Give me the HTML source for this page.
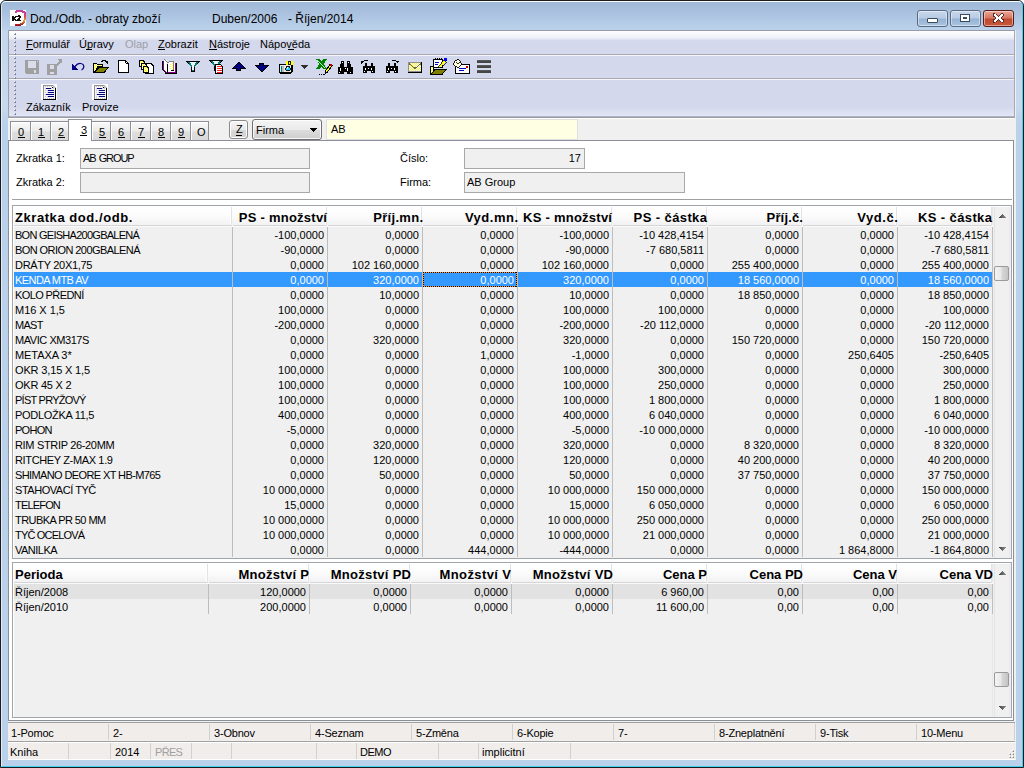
<!DOCTYPE html>
<html><head><meta charset="utf-8"><style>
html,body{margin:0;padding:0;width:1024px;height:768px;overflow:hidden;background:#ffffff;}
body{position:relative;font-family:"Liberation Sans",sans-serif;font-size:11px;}
body>div{position:absolute;white-space:nowrap;box-sizing:content-box;}
svg{shape-rendering:crispEdges;}
</style></head><body>
<div style="left:0;top:0;width:1024px;height:768px;background:linear-gradient(#c2d6ee,#c6d9ef 14%,#b9d1ea 16%,#b9d1ea);border-radius:6px 6px 0 0;"></div>
<div style="left:0;top:0;width:1024px;height:30px;background:linear-gradient(#9db7d7,#a9c1de 40%,#b6cde8 80%,#bbd2ec);border-radius:6px 6px 0 0;"></div>
<div style="left:0;top:0;width:1022px;height:766px;border:1px solid #1a1c20;border-radius:6px 6px 0 0;"></div>
<div style="left:1px;top:1px;width:1020px;height:764px;border:1px solid rgba(255,255,255,0.6);border-top-color:rgba(255,255,255,0.95);border-radius:5px 5px 0 0;border-bottom:1px solid #40d0f0;border-right:1px solid #40d0f0;"></div>
<svg style="position:absolute;left:10px;top:10px" width="16" height="16" viewBox="0 0 16 16"><defs><linearGradient id="k2g" x1="0" y1="0" x2="0" y2="1"><stop offset="0" stop-color="#c040a0"/><stop offset="0.35" stop-color="#e04060"/><stop offset="0.7" stop-color="#f0a030"/><stop offset="1" stop-color="#a01020"/></linearGradient></defs><rect x="0" y="0" width="16" height="16" fill="#fff"/><path d="M5 2.2 Q11 -0.5 14.5 2.5 Q16.5 8 13 13 Q10 15.5 5 15" stroke="url(#k2g)" stroke-width="2.2" fill="none"/><rect x="2" y="6" width="2" height="5" fill="#111"/><path d="M4 8.5 L6.5 6 M4 8.5 L6.5 11" stroke="#111" stroke-width="1.8"/><path d="M7 6.8 Q8.5 5.6 10 6.4 Q10.8 7.6 9 9 L7 10.6 L10.6 10.6" stroke="#111" stroke-width="1.6" fill="none"/></svg>
<div style="left:30px;top:9px;font-size:12px;line-height:20px;color:#000;">Dod./Odb. - obraty zboží</div>
<div style="left:212px;top:9px;font-size:12px;line-height:20px;color:#000;">Duben/2006</div>
<div style="left:288px;top:9px;font-size:12px;line-height:20px;color:#000;">- Říjen/2014</div>
<div style="left:917px;top:10px;width:29px;height:15px;border:1px solid #5a6a80;border-radius:3px;background:linear-gradient(#c8d8ec,#b8cce4 45%,#98b4d4 55%,#a8c4e0);box-shadow:inset 0 0 0 1px rgba(255,255,255,0.45);"></div>
<div style="left:950px;top:10px;width:29px;height:15px;border:1px solid #5a6a80;border-radius:3px;background:linear-gradient(#c8d8ec,#b8cce4 45%,#98b4d4 55%,#a8c4e0);box-shadow:inset 0 0 0 1px rgba(255,255,255,0.45);"></div>
<div style="left:983px;top:10px;width:29px;height:15px;border:1px solid #5a1a1a;border-radius:3px;background:linear-gradient(#e8a898,#d87860 45%,#c04a30 55%,#c85838);box-shadow:inset 0 0 0 1px rgba(255,255,255,0.45);"></div>
<div style="left:927px;top:18px;width:9px;height:3px;background:#fff;border:1px solid #3a4a5a;border-radius:1px;"></div>
<div style="left:961px;top:15px;width:4px;height:2px;border:2px solid #fff;outline:1px solid #3a4a5a;background:#6a7a90;box-shadow:inset 0 0 0 1px #3a4a5a;"></div>
<svg style="position:absolute;left:992px;top:13px" width="13" height="10" viewBox="0 0 13 10"><path d="M2.5 2 L10.5 8 M10.5 2 L2.5 8" stroke="#503030" stroke-width="3.6" stroke-linecap="round"/><path d="M2.5 2 L10.5 8 M10.5 2 L2.5 8" stroke="#fff" stroke-width="2.2" stroke-linecap="round"/></svg>
<div style="left:8px;top:30px;width:1008px;height:730px;background:#f0f0f0;"></div>
<div style="left:8px;top:30px;width:1007px;height:1px;background:#9a9aa4;"></div>
<div style="left:8px;top:30px;width:1px;height:88px;background:#a0a0a4;"></div>
<div style="left:9px;top:31px;width:1005px;height:23px;background:linear-gradient(#ffffff,#eef0f8 30%,#d4d8ec 42%,#d4d8ec);"></div>
<div style="left:9px;top:54px;width:1005px;height:1px;background:#a8a8b0;"></div>
<div style="left:9px;top:55px;width:1005px;height:1px;background:#f4f6fc;"></div>
<div style="left:9px;top:56px;width:1005px;height:22px;background:#d4d8ec;"></div>
<div style="left:9px;top:78px;width:1005px;height:1px;background:#a8a8b0;"></div>
<div style="left:9px;top:79px;width:1005px;height:1px;background:#f4f6fc;"></div>
<div style="left:9px;top:80px;width:1005px;height:36px;background:linear-gradient(#d4d8ec 75%,#e2e6f6);"></div>
<div style="left:9px;top:116px;width:1005px;height:1px;background:#b0b4c8;"></div>
<div style="left:9px;top:117px;width:1006px;height:1px;background:#9c9c9c;"></div>
<div style="left:1014px;top:31px;width:1px;height:87px;background:#a8a8b0;"></div>
<div style="left:14px;top:33px;width:2px;height:2px;background:linear-gradient(135deg,#ffffff 0 35%,#707890 55%);"></div>
<div style="left:14px;top:37px;width:2px;height:2px;background:linear-gradient(135deg,#ffffff 0 35%,#707890 55%);"></div>
<div style="left:14px;top:41px;width:2px;height:2px;background:linear-gradient(135deg,#ffffff 0 35%,#707890 55%);"></div>
<div style="left:14px;top:45px;width:2px;height:2px;background:linear-gradient(135deg,#ffffff 0 35%,#707890 55%);"></div>
<div style="left:14px;top:49px;width:2px;height:2px;background:linear-gradient(135deg,#ffffff 0 35%,#707890 55%);"></div>
<div style="left:14px;top:53px;width:2px;height:2px;background:linear-gradient(135deg,#ffffff 0 35%,#707890 55%);"></div>
<div style="left:14px;top:57px;width:2px;height:2px;background:linear-gradient(135deg,#ffffff 0 35%,#707890 55%);"></div>
<div style="left:14px;top:61px;width:2px;height:2px;background:linear-gradient(135deg,#ffffff 0 35%,#707890 55%);"></div>
<div style="left:14px;top:65px;width:2px;height:2px;background:linear-gradient(135deg,#ffffff 0 35%,#707890 55%);"></div>
<div style="left:14px;top:69px;width:2px;height:2px;background:linear-gradient(135deg,#ffffff 0 35%,#707890 55%);"></div>
<div style="left:14px;top:73px;width:2px;height:2px;background:linear-gradient(135deg,#ffffff 0 35%,#707890 55%);"></div>
<div style="left:14px;top:77px;width:2px;height:2px;background:linear-gradient(135deg,#ffffff 0 35%,#707890 55%);"></div>
<div style="left:14px;top:81px;width:2px;height:2px;background:linear-gradient(135deg,#ffffff 0 35%,#707890 55%);"></div>
<div style="left:14px;top:85px;width:2px;height:2px;background:linear-gradient(135deg,#ffffff 0 35%,#707890 55%);"></div>
<div style="left:14px;top:89px;width:2px;height:2px;background:linear-gradient(135deg,#ffffff 0 35%,#707890 55%);"></div>
<div style="left:14px;top:93px;width:2px;height:2px;background:linear-gradient(135deg,#ffffff 0 35%,#707890 55%);"></div>
<div style="left:14px;top:97px;width:2px;height:2px;background:linear-gradient(135deg,#ffffff 0 35%,#707890 55%);"></div>
<div style="left:14px;top:101px;width:2px;height:2px;background:linear-gradient(135deg,#ffffff 0 35%,#707890 55%);"></div>
<div style="left:14px;top:105px;width:2px;height:2px;background:linear-gradient(135deg,#ffffff 0 35%,#707890 55%);"></div>
<div style="left:14px;top:109px;width:2px;height:2px;background:linear-gradient(135deg,#ffffff 0 35%,#707890 55%);"></div>
<div style="left:14px;top:113px;width:2px;height:2px;background:linear-gradient(135deg,#ffffff 0 35%,#707890 55%);"></div>
<div style="left:26px;top:34px;font-size:11px;line-height:20px;color:#000;">Formulář</div>
<div style="left:79px;top:34px;font-size:11px;line-height:20px;color:#000;">Úpravy</div>
<div style="left:125px;top:34px;font-size:11px;line-height:20px;color:#a0a0a8;">Olap</div>
<div style="left:158px;top:34px;font-size:11px;line-height:20px;color:#000;">Zobrazit</div>
<div style="left:209px;top:34px;font-size:11px;line-height:20px;color:#000;">Nástroje</div>
<div style="left:260px;top:34px;font-size:11px;line-height:20px;color:#000;">Nápověda</div>
<div style="left:26px;top:49px;width:7px;height:1px;background:#000;"></div>
<div style="left:86px;top:49px;width:6px;height:1px;background:#000;"></div>
<div style="left:158px;top:49px;width:7px;height:1px;background:#000;"></div>
<div style="left:209px;top:49px;width:8px;height:1px;background:#000;"></div>
<div style="left:288px;top:49px;width:6px;height:1px;background:#000;"></div>
<svg style="position:absolute;left:0;top:54px" width="520" height="26" viewBox="0 0 520 26"><rect x="25" y="6" width="14" height="14" fill="#a0a0a0"/><rect x="28" y="7" width="8" height="7" fill="#d8dcec"/><rect x="37" y="7" width="1" height="1" fill="#d8dcec"/><rect x="34" y="16" width="2" height="3" fill="#d8dcec"/><rect x="25" y="19" width="1" height="1" fill="#d4d8ec"/><rect x="47" y="10" width="10" height="11" fill="#a0a0a0"/><rect x="50" y="11" width="4" height="4" fill="#d8dcec"/><rect x="50" y="18" width="4" height="2" fill="#d8dcec"/><path d="M55.5 12.5 L60 8" stroke="#a0a0a0" stroke-width="2.2" fill="none" /><polygon points="57,5 62,5 62,10" fill="#a0a0a0" stroke="none" stroke-width="1" /><polygon points="72,10 72,15.5 77.5,15.5" fill="#000080" stroke="none" stroke-width="1" /><path d="M75 12.5 Q77.5 9.200000000000003 80.5 9.5 Q84 10 83.8 12.799999999999997 Q83.4 15.299999999999997 81.5 16" stroke="#000080" stroke-width="1.25" fill="none" shape-rendering="geometricPrecision"/><defs><pattern id="dy" width="2" height="2" patternUnits="userSpaceOnUse"><rect width="2" height="2" fill="#ffff00"/><rect width="1" height="1" fill="#ffffff"/><rect x="1" y="1" width="1" height="1" fill="#ffffff"/></pattern></defs><polygon points="93.5,9.5 96.5,9.5 97.5,10.5 102.5,10.5 102.5,12.5 98,12.5 94.5,18.5 93.5,18.5" fill="url(#dy)" stroke="#000" stroke-width="1" /><polygon points="94.5,18.5 99,13.5 108.5,13.5 104,18.5" fill="#808000" stroke="#000" stroke-width="1" /><path d="M101 8 Q104 5.5 107 8" stroke="#000" stroke-width="1.2" fill="none" /><polygon points="105,8 108.5,7 108,10.5" fill="#000" stroke="none" stroke-width="1" /><polygon points="118.5,6.5 125.5,6.5 128.5,9.5 128.5,18.5 118.5,18.5" fill="#fff" stroke="#000" stroke-width="1" /><rect x="125" y="7" width="1" height="2" fill="#000"/><rect x="126" y="9" width="2" height="1" fill="#000"/><polygon points="145.5,9.5 151,9.5 153.5,12 153.5,19.5 145.5,19.5" fill="#fff" stroke="#000" stroke-width="1" /><polygon points="139.5,6.5 143,6.5 144.5,8 144.5,12.5 139.5,12.5" fill="url(#dy)" stroke="#000" stroke-width="1" /><polygon points="141.5,9.5 145,9.5 146.5,11 146.5,15.5 141.5,15.5" fill="url(#dy)" stroke="#000" stroke-width="1" /><polygon points="143.5,12.5 147,12.5 148.5,14 148.5,18.5 143.5,18.5" fill="url(#dy)" stroke="#000" stroke-width="1" /><rect x="164" y="6" width="3" height="11" fill="#fff"/><rect x="168" y="8" width="6" height="9" fill="#fff"/><rect x="174" y="9" width="1" height="9" fill="#fff"/><rect x="166" y="17" width="9" height="1" fill="#fff"/><rect x="162" y="7" width="1" height="9" fill="#000"/><rect x="163" y="16" width="1" height="1" fill="#000"/><rect x="164" y="17" width="1" height="1" fill="#000"/><rect x="165" y="18" width="1" height="2" fill="#000"/><rect x="166" y="19" width="11" height="1" fill="#000"/><rect x="176" y="9" width="1" height="10" fill="#000"/><rect x="163" y="7" width="1" height="9" fill="#800080"/><rect x="164" y="16" width="1" height="1" fill="#800080"/><rect x="165" y="17" width="1" height="1" fill="#800080"/><rect x="166" y="18" width="10" height="1" fill="#800080"/><rect x="175" y="9" width="1" height="9" fill="#800080"/><rect x="164" y="5" width="1" height="1" fill="#808080"/><rect x="165" y="6" width="1" height="1" fill="#808080"/><rect x="166" y="7" width="1" height="1" fill="#808080"/><rect x="167" y="8" width="1" height="1" fill="#808080"/><rect x="167" y="10" width="1" height="9" fill="#000"/><rect x="168" y="8" width="1" height="1" fill="#808080"/><rect x="169" y="7" width="5" height="1" fill="#808080"/><rect x="173" y="7" width="1" height="9" fill="#808080"/><rect x="170" y="10" width="1" height="1" fill="#ffff00"/><rect x="170" y="12" width="1" height="1" fill="#ffff00"/><rect x="170" y="14" width="1" height="1" fill="#ffff00"/><rect x="172" y="9" width="1" height="1" fill="#ffff00"/><rect x="172" y="11" width="1" height="1" fill="#ffff00"/><rect x="172" y="13" width="1" height="1" fill="#ffff00"/><rect x="172" y="15" width="1" height="1" fill="#ffff00"/><rect x="171" y="16" width="3" height="1" fill="#000"/><polygon points="186,7 200,7 195,13 195,18 191,18 191,13" fill="#000" stroke="none" stroke-width="1" /><polygon points="187.3,8 198.7,8 194,13.400000000000006 194,17 192,17 192,13.400000000000006" fill="#008080" stroke="none" stroke-width="1" /><polygon points="189.5,8 196.5,8 193.6,12 193.6,16 192.4,16 192.4,12" fill="#f0f4f4" stroke="none" stroke-width="1" /><polygon points="209,6 223,6 218,12 218,17 214,17 214,12" fill="#000" stroke="none" stroke-width="1" /><polygon points="210.3,7 221.7,7 217,12.400000000000006 217,16 215,16 215,12.400000000000006" fill="#008080" stroke="none" stroke-width="1" /><polygon points="212.5,7 219.5,7 216.6,11 216.6,15 215.4,15 215.4,11" fill="#f0f4f4" stroke="none" stroke-width="1" /><polygon points="215.5,10.5 220.5,10.5 222.5,12.5 222.5,19.5 215.5,19.5" fill="#fff" stroke="#000" stroke-width="1" /><rect x="221" y="11" width="1" height="1" fill="#000"/><rect x="217" y="12" width="5" height="1" fill="#ff2020"/><rect x="217" y="14" width="5" height="1" fill="#ff2020"/><rect x="217" y="16" width="5" height="1" fill="#ff2020"/><rect x="217" y="18" width="5" height="1" fill="#ff2020"/><rect x="238" y="8" width="2" height="1" fill="#000"/><rect x="237" y="9" width="4" height="1" fill="#000"/><rect x="238" y="9" width="2" height="1" fill="#000080"/><rect x="236" y="10" width="6" height="1" fill="#000"/><rect x="237" y="10" width="4" height="1" fill="#000080"/><rect x="235" y="11" width="8" height="1" fill="#000"/><rect x="236" y="11" width="6" height="1" fill="#000080"/><rect x="234" y="12" width="10" height="1" fill="#000"/><rect x="235" y="12" width="8" height="1" fill="#000080"/><rect x="233" y="13" width="12" height="1" fill="#000"/><rect x="234" y="13" width="10" height="1" fill="#000080"/><rect x="232" y="14" width="14" height="1" fill="#000"/><rect x="233" y="14" width="12" height="1" fill="#000080"/><rect x="232" y="14" width="14" height="1" fill="#000"/><rect x="237" y="14" width="3" height="1" fill="#000080"/><rect x="236" y="15" width="5" height="2" fill="#000"/><rect x="237" y="15" width="3" height="1" fill="#000080"/><rect x="259" y="9" width="5" height="2" fill="#000"/><rect x="260" y="10" width="3" height="1" fill="#000080"/><rect x="255" y="11" width="14" height="1" fill="#000"/><rect x="260" y="11" width="3" height="1" fill="#000080"/><rect x="256" y="12" width="12" height="1" fill="#000"/><rect x="257" y="12" width="10" height="1" fill="#000080"/><rect x="257" y="13" width="10" height="1" fill="#000"/><rect x="258" y="13" width="8" height="1" fill="#000080"/><rect x="258" y="14" width="8" height="1" fill="#000"/><rect x="259" y="14" width="6" height="1" fill="#000080"/><rect x="259" y="15" width="6" height="1" fill="#000"/><rect x="260" y="15" width="4" height="1" fill="#000080"/><rect x="260" y="16" width="4" height="1" fill="#000"/><rect x="261" y="16" width="2" height="1" fill="#000080"/><rect x="261" y="17" width="2" height="1" fill="#000"/><rect x="279.5" y="10.5" width="12.5" height="8.5" rx="1.5" fill="#e8e8e8" stroke="#000" stroke-width="1.6"/><rect x="281" y="12" width="1" height="6" fill="#008080"/><rect x="282" y="12" width="2" height="6" fill="#b8c0c0"/><circle cx="288" cy="14.5" r="2.3" fill="#20d0ff" stroke="#000" stroke-width="0.9"/><circle cx="287.4" cy="13.900000000000006" r="0.9" fill="#ffffff"/><rect x="286" y="7" width="7" height="4" fill="#ffff00"/><circle cx="289.5" cy="9" r="1.5" fill="none" stroke="#000" stroke-width="0.9"/><polygon points="301,11 308.5,11 304.75,15" fill="#303030" stroke="none" stroke-width="1" /><polygon points="316,5 320,5 321.5,7.5 323,5 327,5 323.5,10 327,15 323,15 321.5,12.5 320,15 316,15 319.5,10" fill="#008000" stroke="none" stroke-width="1" /><path d="M317 6 L325 14" stroke="#d0ffd0" stroke-width="0.9" fill="none" /><polygon points="325,20 325.5,17 330,10.5 332,11.5 327.5,18" fill="#ffff00" stroke="#000" stroke-width="1" /><rect x="330" y="10" width="2" height="1.5" fill="#c00000"/><rect x="319" y="20" width="1" height="1" fill="#000"/><rect x="321" y="20" width="1" height="1" fill="#000"/><rect x="323" y="20" width="1" height="1" fill="#000"/><rect x="341" y="7" width="3" height="3" fill="#000"/><rect x="347" y="7" width="3" height="3" fill="#000"/><rect x="340" y="10" width="4" height="4" fill="#000"/><rect x="347" y="10" width="4" height="4" fill="#000"/><rect x="338" y="13" width="15" height="7" fill="#000"/><rect x="344" y="18" width="3" height="2" fill="#d4d8ec"/><rect x="340" y="14" width="1" height="3" fill="#fff"/><rect x="347" y="14" width="1" height="3" fill="#fff"/><rect x="345" y="14" width="1" height="1" fill="#fff"/><rect x="339" y="18" width="1" height="1" fill="#fff"/><rect x="350" y="18" width="1" height="1" fill="#fff"/><rect x="342" y="8" width="1" height="1" fill="#fff"/><rect x="348" y="8" width="1" height="1" fill="#fff"/><rect x="365" y="9" width="2" height="4" fill="#000"/><rect x="371" y="9" width="2" height="4" fill="#000"/><rect x="363" y="12" width="12" height="7" fill="#000"/><rect x="367" y="17" width="4" height="2" fill="#d4d8ec"/><rect x="365" y="14" width="1" height="2" fill="#fff"/><rect x="371" y="14" width="1" height="2" fill="#fff"/><rect x="368" y="14" width="1" height="1" fill="#fff"/><rect x="364" y="17" width="1" height="1" fill="#fff"/><rect x="372" y="17" width="1" height="1" fill="#fff"/><path d="M362.5 8 Q364.5 6 368.5 6.5" stroke="#000" stroke-width="1.1" fill="none" /><polygon points="360.5,7 364,7.5 361.5,10" fill="#000" stroke="none" stroke-width="1" /><rect x="388" y="9" width="2" height="4" fill="#000"/><rect x="394" y="9" width="2" height="4" fill="#000"/><rect x="386" y="12" width="12" height="7" fill="#000"/><rect x="390" y="17" width="4" height="2" fill="#d4d8ec"/><rect x="388" y="14" width="1" height="2" fill="#fff"/><rect x="394" y="14" width="1" height="2" fill="#fff"/><rect x="391" y="14" width="1" height="1" fill="#fff"/><rect x="387" y="17" width="1" height="1" fill="#fff"/><rect x="395" y="17" width="1" height="1" fill="#fff"/><path d="M392 6.5 Q396 6 397.5 8" stroke="#000" stroke-width="1.1" fill="none" /><polygon points="395.5,7.5 399,7 398,10" fill="#000" stroke="none" stroke-width="1" /><defs><pattern id="dl" width="2" height="2" patternUnits="userSpaceOnUse"><rect width="2" height="2" fill="#f0f060"/><rect width="1" height="1" fill="#ffffff"/><rect x="1" y="1" width="1" height="1" fill="#ffffe0"/></pattern></defs><rect x="408" y="8" width="14" height="11" fill="#000"/><rect x="408" y="8" width="13" height="10" fill="#909090"/><rect x="409" y="9" width="12" height="8" fill="url(#dl)"/><path d="M409 9.5 L415 14.5 L421 9.5" stroke="#707030" stroke-width="1" fill="none" /><polygon points="433.5,5.5 442,5.5 442,13 433.5,13" fill="#fff" stroke="#000" stroke-width="1" /><rect x="435" y="4" width="1" height="2" fill="#000"/><rect x="437" y="4" width="1" height="2" fill="#000"/><rect x="439" y="4" width="1" height="2" fill="#000"/><rect x="441" y="4" width="1" height="2" fill="#000"/><rect x="435" y="8" width="4" height="1" fill="#0000c0"/><rect x="435" y="10" width="3" height="1" fill="#0000c0"/><polygon points="430.5,12.5 433,12.5 433,18 430.5,20.5" fill="url(#dy)" stroke="#000" stroke-width="1" /><polygon points="431,20.5 435,15.5 446,15.5 442,20.5" fill="#808000" stroke="#000" stroke-width="1" /><polygon points="438,13 444,6 446,7.5 440,14" fill="#ffff00" stroke="#000" stroke-width="0.8" /><rect x="444" y="4" width="3" height="3" fill="#0000ff"/><polygon points="455.5,10.5 469.5,10.5 469.5,19.5 455.5,19.5" fill="#fff" stroke="#000" stroke-width="1" /><rect x="459" y="14" width="7" height="1" fill="#0000c0"/><rect x="459" y="16" width="5" height="1" fill="#0000c0"/><rect x="466" y="12" width="2" height="2" fill="#c00000"/><circle cx="457.5" cy="9.5" r="3.6" fill="#ffffe0" stroke="#000" stroke-width="0.9"/><path d="M456 8 L457.5 10 L459.5 8" stroke="#000" stroke-width="0.8" fill="none" /><rect x="477" y="6" width="14" height="3" fill="#454545"/><rect x="477" y="6" width="14" height="1" fill="#5a5a5a"/><rect x="477" y="11" width="14" height="3" fill="#454545"/><rect x="477" y="11" width="14" height="1" fill="#5a5a5a"/><rect x="477" y="16" width="14" height="3" fill="#454545"/><rect x="477" y="16" width="14" height="1" fill="#5a5a5a"/></svg>
<svg style="position:absolute;left:41px;top:84px" width="16" height="16" viewBox="0 0 16 16" shape-rendering="crispEdges"><defs><pattern id="dg" width="2" height="2" patternUnits="userSpaceOnUse"><rect width="2" height="2" fill="#f4f4f8"/><rect width="1" height="1" fill="#c8c8c8"/></pattern></defs><rect x="0" y="0" width="16" height="16" fill="#ffffff"/><rect x="2" y="1" width="12" height="14" fill="url(#dg)"/><rect x="2" y="1" width="10" height="1" fill="#909090"/><rect x="2" y="1" width="1" height="14" fill="#909090"/><rect x="14" y="4" width="1" height="12" fill="#000"/><rect x="2" y="15" width="13" height="1" fill="#000"/><rect x="11" y="3" width="4" height="1" fill="#000"/><polygon points="12,1 15,4 12,4" fill="#c0c0c0"/><rect x="5" y="4" width="5" height="1" fill="#000080"/><rect x="7" y="6" width="6" height="1" fill="#000080"/><rect x="7" y="8" width="6" height="1" fill="#000080"/><rect x="5" y="10" width="8" height="1" fill="#000080"/><rect x="7" y="12" width="6" height="1" fill="#000080"/></svg>
<svg style="position:absolute;left:92px;top:84px" width="16" height="16" viewBox="0 0 16 16" shape-rendering="crispEdges"><defs><pattern id="dg" width="2" height="2" patternUnits="userSpaceOnUse"><rect width="2" height="2" fill="#f4f4f8"/><rect width="1" height="1" fill="#c8c8c8"/></pattern></defs><rect x="0" y="0" width="16" height="16" fill="#ffffff"/><rect x="2" y="1" width="12" height="14" fill="url(#dg)"/><rect x="2" y="1" width="10" height="1" fill="#909090"/><rect x="2" y="1" width="1" height="14" fill="#909090"/><rect x="14" y="4" width="1" height="12" fill="#000"/><rect x="2" y="15" width="13" height="1" fill="#000"/><rect x="11" y="3" width="4" height="1" fill="#000"/><polygon points="12,1 15,4 12,4" fill="#c0c0c0"/><rect x="5" y="4" width="5" height="1" fill="#000080"/><rect x="7" y="6" width="6" height="1" fill="#000080"/><rect x="7" y="8" width="6" height="1" fill="#000080"/><rect x="5" y="10" width="8" height="1" fill="#000080"/><rect x="7" y="12" width="6" height="1" fill="#000080"/></svg>
<div style="left:26px;top:97px;font-size:11px;line-height:20px;color:#000;">Zákazník</div>
<div style="left:82px;top:97px;font-size:11px;line-height:20px;color:#000;">Provize</div>
<div style="left:9px;top:118px;width:1005px;height:1px;background:#ffffff;"></div>
<div style="left:10px;top:121px;width:19px;height:19px;border:1px solid #8c8f98;border-bottom:none;background:linear-gradient(#fafafa,#ececec 45%,#dedede 55%,#d8d8d8);box-shadow:inset 1px 1px 0 #fff;"></div>
<div style="left:18px;top:122px;font-size:11px;line-height:20px;color:#000;">0</div>
<div style="left:18px;top:137px;width:7px;height:1px;background:#000;"></div>
<div style="left:30px;top:121px;width:19px;height:19px;border:1px solid #8c8f98;border-bottom:none;background:linear-gradient(#fafafa,#ececec 45%,#dedede 55%,#d8d8d8);box-shadow:inset 1px 1px 0 #fff;"></div>
<div style="left:38px;top:122px;font-size:11px;line-height:20px;color:#000;">1</div>
<div style="left:38px;top:137px;width:7px;height:1px;background:#000;"></div>
<div style="left:50px;top:121px;width:18px;height:19px;border:1px solid #8c8f98;border-bottom:none;background:linear-gradient(#fafafa,#ececec 45%,#dedede 55%,#d8d8d8);box-shadow:inset 1px 1px 0 #fff;"></div>
<div style="left:58px;top:122px;font-size:11px;line-height:20px;color:#000;">2</div>
<div style="left:58px;top:137px;width:7px;height:1px;background:#000;"></div>
<div style="left:91px;top:121px;width:18px;height:19px;border:1px solid #8c8f98;border-bottom:none;background:linear-gradient(#fafafa,#ececec 45%,#dedede 55%,#d8d8d8);box-shadow:inset 1px 1px 0 #fff;"></div>
<div style="left:99px;top:122px;font-size:11px;line-height:20px;color:#000;">5</div>
<div style="left:99px;top:137px;width:7px;height:1px;background:#000;"></div>
<div style="left:110px;top:121px;width:19px;height:19px;border:1px solid #8c8f98;border-bottom:none;background:linear-gradient(#fafafa,#ececec 45%,#dedede 55%,#d8d8d8);box-shadow:inset 1px 1px 0 #fff;"></div>
<div style="left:118px;top:122px;font-size:11px;line-height:20px;color:#000;">6</div>
<div style="left:118px;top:137px;width:7px;height:1px;background:#000;"></div>
<div style="left:130px;top:121px;width:19px;height:19px;border:1px solid #8c8f98;border-bottom:none;background:linear-gradient(#fafafa,#ececec 45%,#dedede 55%,#d8d8d8);box-shadow:inset 1px 1px 0 #fff;"></div>
<div style="left:138px;top:122px;font-size:11px;line-height:20px;color:#000;">7</div>
<div style="left:138px;top:137px;width:7px;height:1px;background:#000;"></div>
<div style="left:150px;top:121px;width:19px;height:19px;border:1px solid #8c8f98;border-bottom:none;background:linear-gradient(#fafafa,#ececec 45%,#dedede 55%,#d8d8d8);box-shadow:inset 1px 1px 0 #fff;"></div>
<div style="left:158px;top:122px;font-size:11px;line-height:20px;color:#000;">8</div>
<div style="left:158px;top:137px;width:7px;height:1px;background:#000;"></div>
<div style="left:170px;top:121px;width:19px;height:19px;border:1px solid #8c8f98;border-bottom:none;background:linear-gradient(#fafafa,#ececec 45%,#dedede 55%,#d8d8d8);box-shadow:inset 1px 1px 0 #fff;"></div>
<div style="left:178px;top:122px;font-size:11px;line-height:20px;color:#000;">9</div>
<div style="left:178px;top:137px;width:7px;height:1px;background:#000;"></div>
<div style="left:190px;top:121px;width:17px;height:19px;border:1px solid #8c8f98;border-bottom:none;background:linear-gradient(#fafafa,#ececec 45%,#dedede 55%,#d8d8d8);box-shadow:inset 1px 1px 0 #fff;"></div>
<div style="left:197px;top:122px;font-size:11px;line-height:20px;color:#000;">O</div>
<div style="left:8px;top:140px;width:1004px;height:579px;border:1px solid #8c8f98;background:#fff;"></div>
<div style="left:68px;top:119px;width:22px;height:21px;border:1px solid #8c8f98;border-bottom:none;background:#fff;"></div>
<div style="left:69px;top:140px;width:22px;height:1px;background:#fff;"></div>
<div style="left:81px;top:120px;font-size:11px;line-height:20px;color:#000;">3</div>
<div style="left:80px;top:135px;width:7px;height:1px;background:#000;"></div>
<div style="left:229px;top:120px;width:17px;height:17px;border:1px solid #8a8a8a;border-radius:3px;background:linear-gradient(#f8f8f8,#e8e8e8 50%,#d8d8d8 51%,#d0d0d0);box-shadow:inset 0 0 0 1px #fff;"></div>
<div style="left:236px;top:119px;font-size:11px;line-height:20px;color:#000;">Z</div>
<div style="left:236px;top:135px;width:6px;height:1px;background:#000;"></div>
<div style="left:252px;top:119px;width:68px;height:19px;border:1px solid #707070;border-radius:3px;background:linear-gradient(#f4f4f4,#ebebeb 50%,#dddddd 51%,#cfcfcf);box-shadow:inset 0 0 0 1px rgba(255,255,255,0.8);"></div>
<div style="left:256px;top:120px;font-size:11px;line-height:20px;color:#000;">Firma</div>
<svg style="position:absolute;left:310px;top:128px" width="8" height="5" viewBox="0 0 8 5"><polygon points="0,0 7,0 3.5,4" fill="#000"/></svg>
<div style="left:326px;top:119px;width:250px;height:19px;border:1px solid #e0e0e0;background:#ffffe4;"></div>
<div style="left:331px;top:119px;font-size:11px;line-height:20px;color:#000;">AB</div>
<div style="left:16px;top:148px;font-size:11px;line-height:20px;color:#000;">Zkratka 1:</div>
<div style="left:16px;top:172px;font-size:11px;line-height:20px;color:#000;">Zkratka 2:</div>
<div style="left:80px;top:148px;width:228px;height:19px;border:1px solid #a8a8a8;background:#f0f0f0;"></div>
<div style="left:80px;top:172px;width:228px;height:19px;border:1px solid #a8a8a8;background:#f0f0f0;"></div>
<div style="left:83px;top:148px;font-size:11px;line-height:20px;color:#000;letter-spacing:-1.1px;word-spacing:1.2px;">AB GROUP</div>
<div style="left:400px;top:148px;font-size:11px;line-height:20px;color:#000;">Číslo:</div>
<div style="left:400px;top:172px;font-size:11px;line-height:20px;color:#000;">Firma:</div>
<div style="left:464px;top:148px;width:119px;height:19px;border:1px solid #a8a8a8;background:#f0f0f0;"></div>
<div style="left:464px;top:172px;width:219px;height:19px;border:1px solid #a8a8a8;background:#f0f0f0;"></div>
<div style="left:181px;top:148px;width:400px;text-align:right;font-size:11px;line-height:20px;color:#000;">17</div>
<div style="left:467px;top:172px;font-size:11px;line-height:20px;color:#000;">AB Group</div>
<div style="left:12px;top:199px;width:1000px;height:1px;background:#a0a0a0;"></div>
<div style="left:12px;top:205px;width:998px;height:352px;border:1px solid #a0a4ac;background:#f0f0f0;"></div>
<div style="left:13px;top:206px;width:997px;height:1px;background:#fff;"></div>
<div style="left:13px;top:206px;width:1px;height:352px;background:#fff;"></div>
<div style="left:14px;top:207px;width:978px;height:18px;background:linear-gradient(#ffffff,#fcfcfc 45%,#f2f2f4);"></div>
<div style="left:14px;top:225px;width:978px;height:1px;background:#d5d5d5;"></div>
<div style="left:14px;top:226px;width:978px;height:1px;background:#fafafa;"></div>
<div style="left:992px;top:207px;width:2px;height:350px;background:#e8e8e8;"></div>
<div style="left:230px;top:207px;width:1px;height:18px;background:#ffffff;"></div>
<div style="left:231px;top:207px;width:1px;height:19px;background:#e2e2e2;"></div>
<div style="left:232px;top:225px;width:1px;height:2px;background:#fafafa;"></div>
<div style="left:325px;top:207px;width:1px;height:18px;background:#ffffff;"></div>
<div style="left:326px;top:207px;width:1px;height:19px;background:#e2e2e2;"></div>
<div style="left:327px;top:225px;width:1px;height:2px;background:#fafafa;"></div>
<div style="left:420px;top:207px;width:1px;height:18px;background:#ffffff;"></div>
<div style="left:421px;top:207px;width:1px;height:19px;background:#e2e2e2;"></div>
<div style="left:422px;top:225px;width:1px;height:2px;background:#fafafa;"></div>
<div style="left:515px;top:207px;width:1px;height:18px;background:#ffffff;"></div>
<div style="left:516px;top:207px;width:1px;height:19px;background:#e2e2e2;"></div>
<div style="left:517px;top:225px;width:1px;height:2px;background:#fafafa;"></div>
<div style="left:610px;top:207px;width:1px;height:18px;background:#ffffff;"></div>
<div style="left:611px;top:207px;width:1px;height:19px;background:#e2e2e2;"></div>
<div style="left:612px;top:225px;width:1px;height:2px;background:#fafafa;"></div>
<div style="left:705px;top:207px;width:1px;height:18px;background:#ffffff;"></div>
<div style="left:706px;top:207px;width:1px;height:19px;background:#e2e2e2;"></div>
<div style="left:707px;top:225px;width:1px;height:2px;background:#fafafa;"></div>
<div style="left:800px;top:207px;width:1px;height:18px;background:#ffffff;"></div>
<div style="left:801px;top:207px;width:1px;height:19px;background:#e2e2e2;"></div>
<div style="left:802px;top:225px;width:1px;height:2px;background:#fafafa;"></div>
<div style="left:895px;top:207px;width:1px;height:18px;background:#ffffff;"></div>
<div style="left:896px;top:207px;width:1px;height:19px;background:#e2e2e2;"></div>
<div style="left:897px;top:225px;width:1px;height:2px;background:#fafafa;"></div>
<div style="left:990px;top:207px;width:1px;height:18px;background:#ffffff;"></div>
<div style="left:991px;top:207px;width:1px;height:19px;background:#e2e2e2;"></div>
<div style="left:992px;top:225px;width:1px;height:2px;background:#fafafa;"></div>
<div style="left:15px;top:208px;font-size:13px;line-height:20px;color:#000;font-weight:700;letter-spacing:0.56px;">Zkratka dod./odb.</div>
<div style="left:-72.75px;top:208px;width:400px;text-align:right;font-size:13px;line-height:20px;color:#000;font-weight:700;letter-spacing:0.25px;">PS - množství</div>
<div style="left:23.29000000000002px;top:208px;width:400px;text-align:right;font-size:13px;line-height:20px;color:#000;font-weight:700;letter-spacing:0.29px;">Příj.mn.</div>
<div style="left:118.5px;top:208px;width:400px;text-align:right;font-size:13px;line-height:20px;color:#000;font-weight:700;letter-spacing:0.5px;">Vyd.mn.</div>
<div style="left:212.25px;top:208px;width:400px;text-align:right;font-size:13px;line-height:20px;color:#000;font-weight:700;letter-spacing:0.25px;">KS - množství</div>
<div style="left:307.4px;top:208px;width:400px;text-align:right;font-size:13px;line-height:20px;color:#000;font-weight:700;letter-spacing:0.4px;">PS - částka</div>
<div style="left:403.16999999999996px;top:208px;width:400px;text-align:right;font-size:13px;line-height:20px;color:#000;font-weight:700;letter-spacing:0.17px;">Příj.č.</div>
<div style="left:498.6px;top:208px;width:400px;text-align:right;font-size:13px;line-height:20px;color:#000;font-weight:700;letter-spacing:0.6px;">Vyd.č.</div>
<div style="left:592.4px;top:208px;width:400px;text-align:right;font-size:13px;line-height:20px;color:#000;font-weight:700;letter-spacing:0.4px;">KS - částka</div>
<div style="left:14px;top:272px;width:978px;height:15px;background:#3399ff;"></div>
<div style="left:232px;top:227px;width:1px;height:330px;background:#bdbdbd;"></div>
<div style="left:327px;top:227px;width:1px;height:330px;background:#bdbdbd;"></div>
<div style="left:422px;top:227px;width:1px;height:330px;background:#bdbdbd;"></div>
<div style="left:517px;top:227px;width:1px;height:330px;background:#bdbdbd;"></div>
<div style="left:612px;top:227px;width:1px;height:330px;background:#bdbdbd;"></div>
<div style="left:707px;top:227px;width:1px;height:330px;background:#bdbdbd;"></div>
<div style="left:802px;top:227px;width:1px;height:330px;background:#bdbdbd;"></div>
<div style="left:897px;top:227px;width:1px;height:330px;background:#bdbdbd;"></div>
<div style="left:992px;top:227px;width:1px;height:330px;background:#bdbdbd;"></div>
<div style="left:423px;top:272px;width:94px;height:1px;background:repeating-linear-gradient(90deg,#000 0 1px,#ff9a20 1px 2px);"></div>
<div style="left:423px;top:286px;width:94px;height:1px;background:repeating-linear-gradient(90deg,#000 0 1px,#ff9a20 1px 2px);"></div>
<div style="left:423px;top:272px;width:1px;height:15px;background:repeating-linear-gradient(180deg,#000 0 1px,#ff9a20 1px 2px);"></div>
<div style="left:516px;top:272px;width:1px;height:15px;background:repeating-linear-gradient(180deg,#000 0 1px,#ff9a20 1px 2px);"></div>
<div style="left:15px;top:225px;font-size:11px;line-height:20px;color:#000;letter-spacing:-0.73px;">BON GEISHA200GBALENÁ</div>
<div style="left:-76px;top:225px;width:400px;text-align:right;font-size:11px;line-height:20px;color:#000;">-100,0000</div>
<div style="left:19px;top:225px;width:400px;text-align:right;font-size:11px;line-height:20px;color:#000;">0,0000</div>
<div style="left:114px;top:225px;width:400px;text-align:right;font-size:11px;line-height:20px;color:#000;">0,0000</div>
<div style="left:209px;top:225px;width:400px;text-align:right;font-size:11px;line-height:20px;color:#000;">-100,0000</div>
<div style="left:304px;top:225px;width:400px;text-align:right;font-size:11px;line-height:20px;color:#000;">-10 428,4154</div>
<div style="left:399px;top:225px;width:400px;text-align:right;font-size:11px;line-height:20px;color:#000;">0,0000</div>
<div style="left:494px;top:225px;width:400px;text-align:right;font-size:11px;line-height:20px;color:#000;">0,0000</div>
<div style="left:589px;top:225px;width:400px;text-align:right;font-size:11px;line-height:20px;color:#000;">-10 428,4154</div>
<div style="left:15px;top:240px;font-size:11px;line-height:20px;color:#000;letter-spacing:-0.57px;">BON ORION 200GBALENÁ</div>
<div style="left:-76px;top:240px;width:400px;text-align:right;font-size:11px;line-height:20px;color:#000;">-90,0000</div>
<div style="left:19px;top:240px;width:400px;text-align:right;font-size:11px;line-height:20px;color:#000;">0,0000</div>
<div style="left:114px;top:240px;width:400px;text-align:right;font-size:11px;line-height:20px;color:#000;">0,0000</div>
<div style="left:209px;top:240px;width:400px;text-align:right;font-size:11px;line-height:20px;color:#000;">-90,0000</div>
<div style="left:304px;top:240px;width:400px;text-align:right;font-size:11px;line-height:20px;color:#000;">-7 680,5811</div>
<div style="left:399px;top:240px;width:400px;text-align:right;font-size:11px;line-height:20px;color:#000;">0,0000</div>
<div style="left:494px;top:240px;width:400px;text-align:right;font-size:11px;line-height:20px;color:#000;">0,0000</div>
<div style="left:589px;top:240px;width:400px;text-align:right;font-size:11px;line-height:20px;color:#000;">-7 680,5811</div>
<div style="left:15px;top:255px;font-size:11px;line-height:20px;color:#000;letter-spacing:-0.31px;">DRÁTY 20X1,75</div>
<div style="left:-76px;top:255px;width:400px;text-align:right;font-size:11px;line-height:20px;color:#000;">0,0000</div>
<div style="left:19px;top:255px;width:400px;text-align:right;font-size:11px;line-height:20px;color:#000;">102 160,0000</div>
<div style="left:114px;top:255px;width:400px;text-align:right;font-size:11px;line-height:20px;color:#000;">0,0000</div>
<div style="left:209px;top:255px;width:400px;text-align:right;font-size:11px;line-height:20px;color:#000;">102 160,0000</div>
<div style="left:304px;top:255px;width:400px;text-align:right;font-size:11px;line-height:20px;color:#000;">0,0000</div>
<div style="left:399px;top:255px;width:400px;text-align:right;font-size:11px;line-height:20px;color:#000;">255 400,0000</div>
<div style="left:494px;top:255px;width:400px;text-align:right;font-size:11px;line-height:20px;color:#000;">0,0000</div>
<div style="left:589px;top:255px;width:400px;text-align:right;font-size:11px;line-height:20px;color:#000;">255 400,0000</div>
<div style="left:15px;top:270px;font-size:11px;line-height:20px;color:#fff;letter-spacing:-0.58px;">KENDA MTB AV</div>
<div style="left:-76px;top:270px;width:400px;text-align:right;font-size:11px;line-height:20px;color:#fff;">0,0000</div>
<div style="left:19px;top:270px;width:400px;text-align:right;font-size:11px;line-height:20px;color:#fff;">320,0000</div>
<div style="left:114px;top:270px;width:400px;text-align:right;font-size:11px;line-height:20px;color:#fff;">0,0000</div>
<div style="left:209px;top:270px;width:400px;text-align:right;font-size:11px;line-height:20px;color:#fff;">320,0000</div>
<div style="left:304px;top:270px;width:400px;text-align:right;font-size:11px;line-height:20px;color:#fff;">0,0000</div>
<div style="left:399px;top:270px;width:400px;text-align:right;font-size:11px;line-height:20px;color:#fff;">18 560,0000</div>
<div style="left:494px;top:270px;width:400px;text-align:right;font-size:11px;line-height:20px;color:#fff;">0,0000</div>
<div style="left:589px;top:270px;width:400px;text-align:right;font-size:11px;line-height:20px;color:#fff;">18 560,0000</div>
<div style="left:15px;top:285px;font-size:11px;line-height:20px;color:#000;letter-spacing:-0.6px;">KOLO PŘEDNÍ</div>
<div style="left:-76px;top:285px;width:400px;text-align:right;font-size:11px;line-height:20px;color:#000;">0,0000</div>
<div style="left:19px;top:285px;width:400px;text-align:right;font-size:11px;line-height:20px;color:#000;">10,0000</div>
<div style="left:114px;top:285px;width:400px;text-align:right;font-size:11px;line-height:20px;color:#000;">0,0000</div>
<div style="left:209px;top:285px;width:400px;text-align:right;font-size:11px;line-height:20px;color:#000;">10,0000</div>
<div style="left:304px;top:285px;width:400px;text-align:right;font-size:11px;line-height:20px;color:#000;">0,0000</div>
<div style="left:399px;top:285px;width:400px;text-align:right;font-size:11px;line-height:20px;color:#000;">18 850,0000</div>
<div style="left:494px;top:285px;width:400px;text-align:right;font-size:11px;line-height:20px;color:#000;">0,0000</div>
<div style="left:589px;top:285px;width:400px;text-align:right;font-size:11px;line-height:20px;color:#000;">18 850,0000</div>
<div style="left:15px;top:300px;font-size:11px;line-height:20px;color:#000;letter-spacing:-0.03px;">M16 X 1,5</div>
<div style="left:-76px;top:300px;width:400px;text-align:right;font-size:11px;line-height:20px;color:#000;">100,0000</div>
<div style="left:19px;top:300px;width:400px;text-align:right;font-size:11px;line-height:20px;color:#000;">0,0000</div>
<div style="left:114px;top:300px;width:400px;text-align:right;font-size:11px;line-height:20px;color:#000;">0,0000</div>
<div style="left:209px;top:300px;width:400px;text-align:right;font-size:11px;line-height:20px;color:#000;">100,0000</div>
<div style="left:304px;top:300px;width:400px;text-align:right;font-size:11px;line-height:20px;color:#000;">100,0000</div>
<div style="left:399px;top:300px;width:400px;text-align:right;font-size:11px;line-height:20px;color:#000;">0,0000</div>
<div style="left:494px;top:300px;width:400px;text-align:right;font-size:11px;line-height:20px;color:#000;">0,0000</div>
<div style="left:589px;top:300px;width:400px;text-align:right;font-size:11px;line-height:20px;color:#000;">100,0000</div>
<div style="left:15px;top:315px;font-size:11px;line-height:20px;color:#000;letter-spacing:-0.7px;">MAST</div>
<div style="left:-76px;top:315px;width:400px;text-align:right;font-size:11px;line-height:20px;color:#000;">-200,0000</div>
<div style="left:19px;top:315px;width:400px;text-align:right;font-size:11px;line-height:20px;color:#000;">0,0000</div>
<div style="left:114px;top:315px;width:400px;text-align:right;font-size:11px;line-height:20px;color:#000;">0,0000</div>
<div style="left:209px;top:315px;width:400px;text-align:right;font-size:11px;line-height:20px;color:#000;">-200,0000</div>
<div style="left:304px;top:315px;width:400px;text-align:right;font-size:11px;line-height:20px;color:#000;">-20 112,0000</div>
<div style="left:399px;top:315px;width:400px;text-align:right;font-size:11px;line-height:20px;color:#000;">0,0000</div>
<div style="left:494px;top:315px;width:400px;text-align:right;font-size:11px;line-height:20px;color:#000;">0,0000</div>
<div style="left:589px;top:315px;width:400px;text-align:right;font-size:11px;line-height:20px;color:#000;">-20 112,0000</div>
<div style="left:15px;top:330px;font-size:11px;line-height:20px;color:#000;letter-spacing:-0.45px;">MAVIC XM317S</div>
<div style="left:-76px;top:330px;width:400px;text-align:right;font-size:11px;line-height:20px;color:#000;">0,0000</div>
<div style="left:19px;top:330px;width:400px;text-align:right;font-size:11px;line-height:20px;color:#000;">320,0000</div>
<div style="left:114px;top:330px;width:400px;text-align:right;font-size:11px;line-height:20px;color:#000;">0,0000</div>
<div style="left:209px;top:330px;width:400px;text-align:right;font-size:11px;line-height:20px;color:#000;">320,0000</div>
<div style="left:304px;top:330px;width:400px;text-align:right;font-size:11px;line-height:20px;color:#000;">0,0000</div>
<div style="left:399px;top:330px;width:400px;text-align:right;font-size:11px;line-height:20px;color:#000;">150 720,0000</div>
<div style="left:494px;top:330px;width:400px;text-align:right;font-size:11px;line-height:20px;color:#000;">0,0000</div>
<div style="left:589px;top:330px;width:400px;text-align:right;font-size:11px;line-height:20px;color:#000;">150 720,0000</div>
<div style="left:15px;top:345px;font-size:11px;line-height:20px;color:#000;letter-spacing:-0.07px;">METAXA 3*</div>
<div style="left:-76px;top:345px;width:400px;text-align:right;font-size:11px;line-height:20px;color:#000;">0,0000</div>
<div style="left:19px;top:345px;width:400px;text-align:right;font-size:11px;line-height:20px;color:#000;">0,0000</div>
<div style="left:114px;top:345px;width:400px;text-align:right;font-size:11px;line-height:20px;color:#000;">1,0000</div>
<div style="left:209px;top:345px;width:400px;text-align:right;font-size:11px;line-height:20px;color:#000;">-1,0000</div>
<div style="left:304px;top:345px;width:400px;text-align:right;font-size:11px;line-height:20px;color:#000;">0,0000</div>
<div style="left:399px;top:345px;width:400px;text-align:right;font-size:11px;line-height:20px;color:#000;">0,0000</div>
<div style="left:494px;top:345px;width:400px;text-align:right;font-size:11px;line-height:20px;color:#000;">250,6405</div>
<div style="left:589px;top:345px;width:400px;text-align:right;font-size:11px;line-height:20px;color:#000;">-250,6405</div>
<div style="left:15px;top:360px;font-size:11px;line-height:20px;color:#000;letter-spacing:-0.15px;">OKR 3,15 X 1,5</div>
<div style="left:-76px;top:360px;width:400px;text-align:right;font-size:11px;line-height:20px;color:#000;">100,0000</div>
<div style="left:19px;top:360px;width:400px;text-align:right;font-size:11px;line-height:20px;color:#000;">0,0000</div>
<div style="left:114px;top:360px;width:400px;text-align:right;font-size:11px;line-height:20px;color:#000;">0,0000</div>
<div style="left:209px;top:360px;width:400px;text-align:right;font-size:11px;line-height:20px;color:#000;">100,0000</div>
<div style="left:304px;top:360px;width:400px;text-align:right;font-size:11px;line-height:20px;color:#000;">300,0000</div>
<div style="left:399px;top:360px;width:400px;text-align:right;font-size:11px;line-height:20px;color:#000;">0,0000</div>
<div style="left:494px;top:360px;width:400px;text-align:right;font-size:11px;line-height:20px;color:#000;">0,0000</div>
<div style="left:589px;top:360px;width:400px;text-align:right;font-size:11px;line-height:20px;color:#000;">300,0000</div>
<div style="left:15px;top:375px;font-size:11px;line-height:20px;color:#000;letter-spacing:-0.24px;">OKR 45 X 2</div>
<div style="left:-76px;top:375px;width:400px;text-align:right;font-size:11px;line-height:20px;color:#000;">100,0000</div>
<div style="left:19px;top:375px;width:400px;text-align:right;font-size:11px;line-height:20px;color:#000;">0,0000</div>
<div style="left:114px;top:375px;width:400px;text-align:right;font-size:11px;line-height:20px;color:#000;">0,0000</div>
<div style="left:209px;top:375px;width:400px;text-align:right;font-size:11px;line-height:20px;color:#000;">100,0000</div>
<div style="left:304px;top:375px;width:400px;text-align:right;font-size:11px;line-height:20px;color:#000;">250,0000</div>
<div style="left:399px;top:375px;width:400px;text-align:right;font-size:11px;line-height:20px;color:#000;">0,0000</div>
<div style="left:494px;top:375px;width:400px;text-align:right;font-size:11px;line-height:20px;color:#000;">0,0000</div>
<div style="left:589px;top:375px;width:400px;text-align:right;font-size:11px;line-height:20px;color:#000;">250,0000</div>
<div style="left:15px;top:390px;font-size:11px;line-height:20px;color:#000;letter-spacing:-0.75px;">PÍST PRYŽOVÝ</div>
<div style="left:-76px;top:390px;width:400px;text-align:right;font-size:11px;line-height:20px;color:#000;">100,0000</div>
<div style="left:19px;top:390px;width:400px;text-align:right;font-size:11px;line-height:20px;color:#000;">0,0000</div>
<div style="left:114px;top:390px;width:400px;text-align:right;font-size:11px;line-height:20px;color:#000;">0,0000</div>
<div style="left:209px;top:390px;width:400px;text-align:right;font-size:11px;line-height:20px;color:#000;">100,0000</div>
<div style="left:304px;top:390px;width:400px;text-align:right;font-size:11px;line-height:20px;color:#000;">1 800,0000</div>
<div style="left:399px;top:390px;width:400px;text-align:right;font-size:11px;line-height:20px;color:#000;">0,0000</div>
<div style="left:494px;top:390px;width:400px;text-align:right;font-size:11px;line-height:20px;color:#000;">0,0000</div>
<div style="left:589px;top:390px;width:400px;text-align:right;font-size:11px;line-height:20px;color:#000;">1 800,0000</div>
<div style="left:15px;top:405px;font-size:11px;line-height:20px;color:#000;letter-spacing:-0.3px;">PODLOŽKA 11,5</div>
<div style="left:-76px;top:405px;width:400px;text-align:right;font-size:11px;line-height:20px;color:#000;">400,0000</div>
<div style="left:19px;top:405px;width:400px;text-align:right;font-size:11px;line-height:20px;color:#000;">0,0000</div>
<div style="left:114px;top:405px;width:400px;text-align:right;font-size:11px;line-height:20px;color:#000;">0,0000</div>
<div style="left:209px;top:405px;width:400px;text-align:right;font-size:11px;line-height:20px;color:#000;">400,0000</div>
<div style="left:304px;top:405px;width:400px;text-align:right;font-size:11px;line-height:20px;color:#000;">6 040,0000</div>
<div style="left:399px;top:405px;width:400px;text-align:right;font-size:11px;line-height:20px;color:#000;">0,0000</div>
<div style="left:494px;top:405px;width:400px;text-align:right;font-size:11px;line-height:20px;color:#000;">0,0000</div>
<div style="left:589px;top:405px;width:400px;text-align:right;font-size:11px;line-height:20px;color:#000;">6 040,0000</div>
<div style="left:15px;top:420px;font-size:11px;line-height:20px;color:#000;letter-spacing:-0.72px;">POHON</div>
<div style="left:-76px;top:420px;width:400px;text-align:right;font-size:11px;line-height:20px;color:#000;">-5,0000</div>
<div style="left:19px;top:420px;width:400px;text-align:right;font-size:11px;line-height:20px;color:#000;">0,0000</div>
<div style="left:114px;top:420px;width:400px;text-align:right;font-size:11px;line-height:20px;color:#000;">0,0000</div>
<div style="left:209px;top:420px;width:400px;text-align:right;font-size:11px;line-height:20px;color:#000;">-5,0000</div>
<div style="left:304px;top:420px;width:400px;text-align:right;font-size:11px;line-height:20px;color:#000;">-10 000,0000</div>
<div style="left:399px;top:420px;width:400px;text-align:right;font-size:11px;line-height:20px;color:#000;">0,0000</div>
<div style="left:494px;top:420px;width:400px;text-align:right;font-size:11px;line-height:20px;color:#000;">0,0000</div>
<div style="left:589px;top:420px;width:400px;text-align:right;font-size:11px;line-height:20px;color:#000;">-10 000,0000</div>
<div style="left:15px;top:435px;font-size:11px;line-height:20px;color:#000;letter-spacing:-0.33px;">RIM STRIP 26-20MM</div>
<div style="left:-76px;top:435px;width:400px;text-align:right;font-size:11px;line-height:20px;color:#000;">0,0000</div>
<div style="left:19px;top:435px;width:400px;text-align:right;font-size:11px;line-height:20px;color:#000;">320,0000</div>
<div style="left:114px;top:435px;width:400px;text-align:right;font-size:11px;line-height:20px;color:#000;">0,0000</div>
<div style="left:209px;top:435px;width:400px;text-align:right;font-size:11px;line-height:20px;color:#000;">320,0000</div>
<div style="left:304px;top:435px;width:400px;text-align:right;font-size:11px;line-height:20px;color:#000;">0,0000</div>
<div style="left:399px;top:435px;width:400px;text-align:right;font-size:11px;line-height:20px;color:#000;">8 320,0000</div>
<div style="left:494px;top:435px;width:400px;text-align:right;font-size:11px;line-height:20px;color:#000;">0,0000</div>
<div style="left:589px;top:435px;width:400px;text-align:right;font-size:11px;line-height:20px;color:#000;">8 320,0000</div>
<div style="left:15px;top:450px;font-size:11px;line-height:20px;color:#000;letter-spacing:-0.36px;">RITCHEY Z-MAX 1.9</div>
<div style="left:-76px;top:450px;width:400px;text-align:right;font-size:11px;line-height:20px;color:#000;">0,0000</div>
<div style="left:19px;top:450px;width:400px;text-align:right;font-size:11px;line-height:20px;color:#000;">120,0000</div>
<div style="left:114px;top:450px;width:400px;text-align:right;font-size:11px;line-height:20px;color:#000;">0,0000</div>
<div style="left:209px;top:450px;width:400px;text-align:right;font-size:11px;line-height:20px;color:#000;">120,0000</div>
<div style="left:304px;top:450px;width:400px;text-align:right;font-size:11px;line-height:20px;color:#000;">0,0000</div>
<div style="left:399px;top:450px;width:400px;text-align:right;font-size:11px;line-height:20px;color:#000;">40 200,0000</div>
<div style="left:494px;top:450px;width:400px;text-align:right;font-size:11px;line-height:20px;color:#000;">0,0000</div>
<div style="left:589px;top:450px;width:400px;text-align:right;font-size:11px;line-height:20px;color:#000;">40 200,0000</div>
<div style="left:15px;top:465px;font-size:11px;line-height:20px;color:#000;letter-spacing:-0.61px;">SHIMANO DEORE XT HB-M765</div>
<div style="left:-76px;top:465px;width:400px;text-align:right;font-size:11px;line-height:20px;color:#000;">0,0000</div>
<div style="left:19px;top:465px;width:400px;text-align:right;font-size:11px;line-height:20px;color:#000;">50,0000</div>
<div style="left:114px;top:465px;width:400px;text-align:right;font-size:11px;line-height:20px;color:#000;">0,0000</div>
<div style="left:209px;top:465px;width:400px;text-align:right;font-size:11px;line-height:20px;color:#000;">50,0000</div>
<div style="left:304px;top:465px;width:400px;text-align:right;font-size:11px;line-height:20px;color:#000;">0,0000</div>
<div style="left:399px;top:465px;width:400px;text-align:right;font-size:11px;line-height:20px;color:#000;">37 750,0000</div>
<div style="left:494px;top:465px;width:400px;text-align:right;font-size:11px;line-height:20px;color:#000;">0,0000</div>
<div style="left:589px;top:465px;width:400px;text-align:right;font-size:11px;line-height:20px;color:#000;">37 750,0000</div>
<div style="left:15px;top:480px;font-size:11px;line-height:20px;color:#000;letter-spacing:-0.46px;">STAHOVACÍ TYČ</div>
<div style="left:-76px;top:480px;width:400px;text-align:right;font-size:11px;line-height:20px;color:#000;">10 000,0000</div>
<div style="left:19px;top:480px;width:400px;text-align:right;font-size:11px;line-height:20px;color:#000;">0,0000</div>
<div style="left:114px;top:480px;width:400px;text-align:right;font-size:11px;line-height:20px;color:#000;">0,0000</div>
<div style="left:209px;top:480px;width:400px;text-align:right;font-size:11px;line-height:20px;color:#000;">10 000,0000</div>
<div style="left:304px;top:480px;width:400px;text-align:right;font-size:11px;line-height:20px;color:#000;">150 000,0000</div>
<div style="left:399px;top:480px;width:400px;text-align:right;font-size:11px;line-height:20px;color:#000;">0,0000</div>
<div style="left:494px;top:480px;width:400px;text-align:right;font-size:11px;line-height:20px;color:#000;">0,0000</div>
<div style="left:589px;top:480px;width:400px;text-align:right;font-size:11px;line-height:20px;color:#000;">150 000,0000</div>
<div style="left:15px;top:495px;font-size:11px;line-height:20px;color:#000;letter-spacing:-0.82px;">TELEFON</div>
<div style="left:-76px;top:495px;width:400px;text-align:right;font-size:11px;line-height:20px;color:#000;">15,0000</div>
<div style="left:19px;top:495px;width:400px;text-align:right;font-size:11px;line-height:20px;color:#000;">0,0000</div>
<div style="left:114px;top:495px;width:400px;text-align:right;font-size:11px;line-height:20px;color:#000;">0,0000</div>
<div style="left:209px;top:495px;width:400px;text-align:right;font-size:11px;line-height:20px;color:#000;">15,0000</div>
<div style="left:304px;top:495px;width:400px;text-align:right;font-size:11px;line-height:20px;color:#000;">6 050,0000</div>
<div style="left:399px;top:495px;width:400px;text-align:right;font-size:11px;line-height:20px;color:#000;">0,0000</div>
<div style="left:494px;top:495px;width:400px;text-align:right;font-size:11px;line-height:20px;color:#000;">0,0000</div>
<div style="left:589px;top:495px;width:400px;text-align:right;font-size:11px;line-height:20px;color:#000;">6 050,0000</div>
<div style="left:15px;top:510px;font-size:11px;line-height:20px;color:#000;letter-spacing:-0.56px;">TRUBKA PR 50 MM</div>
<div style="left:-76px;top:510px;width:400px;text-align:right;font-size:11px;line-height:20px;color:#000;">10 000,0000</div>
<div style="left:19px;top:510px;width:400px;text-align:right;font-size:11px;line-height:20px;color:#000;">0,0000</div>
<div style="left:114px;top:510px;width:400px;text-align:right;font-size:11px;line-height:20px;color:#000;">0,0000</div>
<div style="left:209px;top:510px;width:400px;text-align:right;font-size:11px;line-height:20px;color:#000;">10 000,0000</div>
<div style="left:304px;top:510px;width:400px;text-align:right;font-size:11px;line-height:20px;color:#000;">250 000,0000</div>
<div style="left:399px;top:510px;width:400px;text-align:right;font-size:11px;line-height:20px;color:#000;">0,0000</div>
<div style="left:494px;top:510px;width:400px;text-align:right;font-size:11px;line-height:20px;color:#000;">0,0000</div>
<div style="left:589px;top:510px;width:400px;text-align:right;font-size:11px;line-height:20px;color:#000;">250 000,0000</div>
<div style="left:15px;top:525px;font-size:11px;line-height:20px;color:#000;letter-spacing:-0.82px;">TYČ OCELOVÁ</div>
<div style="left:-76px;top:525px;width:400px;text-align:right;font-size:11px;line-height:20px;color:#000;">10 000,0000</div>
<div style="left:19px;top:525px;width:400px;text-align:right;font-size:11px;line-height:20px;color:#000;">0,0000</div>
<div style="left:114px;top:525px;width:400px;text-align:right;font-size:11px;line-height:20px;color:#000;">0,0000</div>
<div style="left:209px;top:525px;width:400px;text-align:right;font-size:11px;line-height:20px;color:#000;">10 000,0000</div>
<div style="left:304px;top:525px;width:400px;text-align:right;font-size:11px;line-height:20px;color:#000;">21 000,0000</div>
<div style="left:399px;top:525px;width:400px;text-align:right;font-size:11px;line-height:20px;color:#000;">0,0000</div>
<div style="left:494px;top:525px;width:400px;text-align:right;font-size:11px;line-height:20px;color:#000;">0,0000</div>
<div style="left:589px;top:525px;width:400px;text-align:right;font-size:11px;line-height:20px;color:#000;">21 000,0000</div>
<div style="left:15px;top:540px;font-size:11px;line-height:20px;color:#000;letter-spacing:-0.52px;">VANILKA</div>
<div style="left:-76px;top:540px;width:400px;text-align:right;font-size:11px;line-height:20px;color:#000;">0,0000</div>
<div style="left:19px;top:540px;width:400px;text-align:right;font-size:11px;line-height:20px;color:#000;">0,0000</div>
<div style="left:114px;top:540px;width:400px;text-align:right;font-size:11px;line-height:20px;color:#000;">444,0000</div>
<div style="left:209px;top:540px;width:400px;text-align:right;font-size:11px;line-height:20px;color:#000;">-444,0000</div>
<div style="left:304px;top:540px;width:400px;text-align:right;font-size:11px;line-height:20px;color:#000;">0,0000</div>
<div style="left:399px;top:540px;width:400px;text-align:right;font-size:11px;line-height:20px;color:#000;">0,0000</div>
<div style="left:494px;top:540px;width:400px;text-align:right;font-size:11px;line-height:20px;color:#000;">1 864,8000</div>
<div style="left:589px;top:540px;width:400px;text-align:right;font-size:11px;line-height:20px;color:#000;">-1 864,8000</div>
<div style="left:993px;top:207px;width:17px;height:351px;background:#f0f0f0;"></div>
<div style="left:994px;top:207px;width:16px;height:351px;background:#f0f0f0;box-shadow:inset 1px 0 0 #e4e4e4, inset -1px 0 0 #e8e8e8;"></div>
<svg style="position:absolute;left:999px;top:214px" width="8" height="5" viewBox="0 0 8 5"><defs><linearGradient id="ag207" x1="0" x2="1"><stop offset="0" stop-color="#404040"/><stop offset="1" stop-color="#909090"/></linearGradient></defs><polygon points="0,4 7,4 3.5,0" fill="url(#ag207)"/></svg>
<svg style="position:absolute;left:999px;top:547px" width="8" height="5" viewBox="0 0 8 5"><polygon points="0,0 7,0 3.5,4" fill="url(#ag207)"/></svg>
<div style="left:994px;top:266px;width:13px;height:13px;border:1px solid #9a9a9a;border-radius:2px;background:linear-gradient(90deg,#f4f4f4,#e8e8e8 48%,#d8d8d8 52%,#c4c4c4);"></div>
<div style="left:12px;top:562px;width:998px;height:154px;border:1px solid #a0a4ac;background:#f0f0f0;"></div>
<div style="left:13px;top:563px;width:997px;height:1px;background:#fff;"></div>
<div style="left:13px;top:563px;width:1px;height:154px;background:#fff;"></div>
<div style="left:14px;top:564px;width:978px;height:18px;background:linear-gradient(#ffffff,#fcfcfc 45%,#f2f2f4);"></div>
<div style="left:14px;top:582px;width:978px;height:1px;background:#d5d5d5;"></div>
<div style="left:14px;top:583px;width:978px;height:1px;background:#fafafa;"></div>
<div style="left:992px;top:564px;width:2px;height:152px;background:#e8e8e8;"></div>
<div style="left:206px;top:564px;width:1px;height:18px;background:#ffffff;"></div>
<div style="left:207px;top:564px;width:1px;height:19px;background:#e2e2e2;"></div>
<div style="left:208px;top:582px;width:1px;height:2px;background:#fafafa;"></div>
<div style="left:307px;top:564px;width:1px;height:18px;background:#ffffff;"></div>
<div style="left:308px;top:564px;width:1px;height:19px;background:#e2e2e2;"></div>
<div style="left:309px;top:582px;width:1px;height:2px;background:#fafafa;"></div>
<div style="left:408px;top:564px;width:1px;height:18px;background:#ffffff;"></div>
<div style="left:409px;top:564px;width:1px;height:19px;background:#e2e2e2;"></div>
<div style="left:410px;top:582px;width:1px;height:2px;background:#fafafa;"></div>
<div style="left:509px;top:564px;width:1px;height:18px;background:#ffffff;"></div>
<div style="left:510px;top:564px;width:1px;height:19px;background:#e2e2e2;"></div>
<div style="left:511px;top:582px;width:1px;height:2px;background:#fafafa;"></div>
<div style="left:610px;top:564px;width:1px;height:18px;background:#ffffff;"></div>
<div style="left:611px;top:564px;width:1px;height:19px;background:#e2e2e2;"></div>
<div style="left:612px;top:582px;width:1px;height:2px;background:#fafafa;"></div>
<div style="left:705px;top:564px;width:1px;height:18px;background:#ffffff;"></div>
<div style="left:706px;top:564px;width:1px;height:19px;background:#e2e2e2;"></div>
<div style="left:707px;top:582px;width:1px;height:2px;background:#fafafa;"></div>
<div style="left:800px;top:564px;width:1px;height:18px;background:#ffffff;"></div>
<div style="left:801px;top:564px;width:1px;height:19px;background:#e2e2e2;"></div>
<div style="left:802px;top:582px;width:1px;height:2px;background:#fafafa;"></div>
<div style="left:895px;top:564px;width:1px;height:18px;background:#ffffff;"></div>
<div style="left:896px;top:564px;width:1px;height:19px;background:#e2e2e2;"></div>
<div style="left:897px;top:582px;width:1px;height:2px;background:#fafafa;"></div>
<div style="left:990px;top:564px;width:1px;height:18px;background:#ffffff;"></div>
<div style="left:991px;top:564px;width:1px;height:19px;background:#e2e2e2;"></div>
<div style="left:992px;top:582px;width:1px;height:2px;background:#fafafa;"></div>
<div style="left:15px;top:565px;font-size:13px;line-height:20px;color:#000;font-weight:700;">Perioda</div>
<div style="left:-90.69999999999999px;top:565px;width:400px;text-align:right;font-size:13px;line-height:20px;color:#000;font-weight:700;letter-spacing:0.3px;">Množství P</div>
<div style="left:11.300000000000011px;top:565px;width:400px;text-align:right;font-size:13px;line-height:20px;color:#000;font-weight:700;letter-spacing:0.3px;">Množství PD</div>
<div style="left:111.39999999999998px;top:565px;width:400px;text-align:right;font-size:13px;line-height:20px;color:#000;font-weight:700;letter-spacing:0.4px;">Množství V</div>
<div style="left:213.29999999999995px;top:565px;width:400px;text-align:right;font-size:13px;line-height:20px;color:#000;font-weight:700;letter-spacing:0.3px;">Množství VD</div>
<div style="left:307px;top:565px;width:400px;text-align:right;font-size:13px;line-height:20px;color:#000;font-weight:700;">Cena P</div>
<div style="left:403px;top:565px;width:400px;text-align:right;font-size:13px;line-height:20px;color:#000;font-weight:700;">Cena PD</div>
<div style="left:497px;top:565px;width:400px;text-align:right;font-size:13px;line-height:20px;color:#000;font-weight:700;">Cena V</div>
<div style="left:593px;top:565px;width:400px;text-align:right;font-size:13px;line-height:20px;color:#000;font-weight:700;">Cena VD</div>
<div style="left:14px;top:584px;width:978px;height:15px;background:#e2e2e2;"></div>
<div style="left:208px;top:584px;width:1px;height:30px;background:#bdbdbd;"></div>
<div style="left:309px;top:584px;width:1px;height:30px;background:#bdbdbd;"></div>
<div style="left:410px;top:584px;width:1px;height:30px;background:#bdbdbd;"></div>
<div style="left:511px;top:584px;width:1px;height:30px;background:#bdbdbd;"></div>
<div style="left:612px;top:584px;width:1px;height:30px;background:#bdbdbd;"></div>
<div style="left:707px;top:584px;width:1px;height:30px;background:#bdbdbd;"></div>
<div style="left:802px;top:584px;width:1px;height:30px;background:#bdbdbd;"></div>
<div style="left:897px;top:584px;width:1px;height:30px;background:#bdbdbd;"></div>
<div style="left:992px;top:584px;width:1px;height:30px;background:#bdbdbd;"></div>
<div style="left:15px;top:582px;font-size:11px;line-height:20px;color:#000;">Říjen/2008</div>
<div style="left:-94px;top:582px;width:400px;text-align:right;font-size:11px;line-height:20px;color:#000;">120,0000</div>
<div style="left:7px;top:582px;width:400px;text-align:right;font-size:11px;line-height:20px;color:#000;">0,0000</div>
<div style="left:108px;top:582px;width:400px;text-align:right;font-size:11px;line-height:20px;color:#000;">0,0000</div>
<div style="left:209px;top:582px;width:400px;text-align:right;font-size:11px;line-height:20px;color:#000;">0,0000</div>
<div style="left:304px;top:582px;width:400px;text-align:right;font-size:11px;line-height:20px;color:#000;">6 960,00</div>
<div style="left:399px;top:582px;width:400px;text-align:right;font-size:11px;line-height:20px;color:#000;">0,00</div>
<div style="left:494px;top:582px;width:400px;text-align:right;font-size:11px;line-height:20px;color:#000;">0,00</div>
<div style="left:589px;top:582px;width:400px;text-align:right;font-size:11px;line-height:20px;color:#000;">0,00</div>
<div style="left:15px;top:597px;font-size:11px;line-height:20px;color:#000;">Říjen/2010</div>
<div style="left:-94px;top:597px;width:400px;text-align:right;font-size:11px;line-height:20px;color:#000;">200,0000</div>
<div style="left:7px;top:597px;width:400px;text-align:right;font-size:11px;line-height:20px;color:#000;">0,0000</div>
<div style="left:108px;top:597px;width:400px;text-align:right;font-size:11px;line-height:20px;color:#000;">0,0000</div>
<div style="left:209px;top:597px;width:400px;text-align:right;font-size:11px;line-height:20px;color:#000;">0,0000</div>
<div style="left:304px;top:597px;width:400px;text-align:right;font-size:11px;line-height:20px;color:#000;">11 600,00</div>
<div style="left:399px;top:597px;width:400px;text-align:right;font-size:11px;line-height:20px;color:#000;">0,00</div>
<div style="left:494px;top:597px;width:400px;text-align:right;font-size:11px;line-height:20px;color:#000;">0,00</div>
<div style="left:589px;top:597px;width:400px;text-align:right;font-size:11px;line-height:20px;color:#000;">0,00</div>
<div style="left:993px;top:564px;width:17px;height:153px;background:#f0f0f0;"></div>
<div style="left:994px;top:564px;width:16px;height:153px;background:#f0f0f0;box-shadow:inset 1px 0 0 #e4e4e4, inset -1px 0 0 #e8e8e8;"></div>
<svg style="position:absolute;left:999px;top:571px" width="8" height="5" viewBox="0 0 8 5"><defs><linearGradient id="ag564" x1="0" x2="1"><stop offset="0" stop-color="#404040"/><stop offset="1" stop-color="#909090"/></linearGradient></defs><polygon points="0,4 7,4 3.5,0" fill="url(#ag564)"/></svg>
<svg style="position:absolute;left:999px;top:706px" width="8" height="5" viewBox="0 0 8 5"><polygon points="0,0 7,0 3.5,4" fill="url(#ag564)"/></svg>
<div style="left:994px;top:672px;width:13px;height:13px;border:1px solid #9a9a9a;border-radius:2px;background:linear-gradient(90deg,#f4f4f4,#e8e8e8 48%,#d8d8d8 52%,#c4c4c4);"></div>
<div style="left:8px;top:722px;width:1007px;height:1px;background:#a0a0a0;"></div>
<div style="left:8px;top:723px;width:1007px;height:17px;background:#f0edeb;"></div>
<div style="left:8px;top:741px;width:1007px;height:1px;background:#a0a0a0;"></div>
<div style="left:8px;top:742px;width:1007px;height:1px;background:#ffffff;"></div>
<div style="left:8px;top:743px;width:1007px;height:16px;background:#f0edeb;"></div>
<div style="left:8px;top:759px;width:1007px;height:1px;background:#ffffff;"></div>
<div style="left:11px;top:723px;font-size:11px;line-height:20px;color:#000;letter-spacing:-0.2px;">1-Pomoc</div>
<div style="left:108px;top:724px;width:1px;height:16px;background:#d0d0d0;"></div>
<div style="left:113px;top:723px;font-size:11px;line-height:20px;color:#000;letter-spacing:-0.2px;">2-</div>
<div style="left:209px;top:724px;width:1px;height:16px;background:#d0d0d0;"></div>
<div style="left:214px;top:723px;font-size:11px;line-height:20px;color:#000;letter-spacing:-0.2px;">3-Obnov</div>
<div style="left:310px;top:724px;width:1px;height:16px;background:#d0d0d0;"></div>
<div style="left:315px;top:723px;font-size:11px;line-height:20px;color:#000;letter-spacing:-0.2px;">4-Seznam</div>
<div style="left:411px;top:724px;width:1px;height:16px;background:#d0d0d0;"></div>
<div style="left:416px;top:723px;font-size:11px;line-height:20px;color:#000;letter-spacing:-0.2px;">5-Změna</div>
<div style="left:512px;top:724px;width:1px;height:16px;background:#d0d0d0;"></div>
<div style="left:517px;top:723px;font-size:11px;line-height:20px;color:#000;letter-spacing:-0.2px;">6-Kopie</div>
<div style="left:613px;top:724px;width:1px;height:16px;background:#d0d0d0;"></div>
<div style="left:618px;top:723px;font-size:11px;line-height:20px;color:#000;letter-spacing:-0.2px;">7-</div>
<div style="left:714px;top:724px;width:1px;height:16px;background:#d0d0d0;"></div>
<div style="left:719px;top:723px;font-size:11px;line-height:20px;color:#000;letter-spacing:-0.2px;">8-Zneplatnění</div>
<div style="left:815px;top:724px;width:1px;height:16px;background:#d0d0d0;"></div>
<div style="left:820px;top:723px;font-size:11px;line-height:20px;color:#000;letter-spacing:-0.2px;">9-Tisk</div>
<div style="left:916px;top:724px;width:1px;height:16px;background:#d0d0d0;"></div>
<div style="left:921px;top:723px;font-size:11px;line-height:20px;color:#000;letter-spacing:-0.2px;">10-Menu</div>
<div style="left:1014px;top:723px;width:1px;height:17px;background:#d0d0d0;"></div>
<div style="left:68px;top:743px;width:1px;height:16px;background:#d4d0ce;"></div>
<div style="left:110px;top:743px;width:1px;height:16px;background:#d4d0ce;"></div>
<div style="left:150px;top:743px;width:1px;height:16px;background:#d4d0ce;"></div>
<div style="left:191px;top:743px;width:1px;height:16px;background:#d4d0ce;"></div>
<div style="left:231px;top:743px;width:1px;height:16px;background:#d4d0ce;"></div>
<div style="left:316px;top:743px;width:1px;height:16px;background:#d4d0ce;"></div>
<div style="left:356px;top:743px;width:1px;height:16px;background:#d4d0ce;"></div>
<div style="left:438px;top:743px;width:1px;height:16px;background:#d4d0ce;"></div>
<div style="left:478px;top:743px;width:1px;height:16px;background:#d4d0ce;"></div>
<div style="left:570px;top:743px;width:1px;height:16px;background:#d4d0ce;"></div>
<div style="left:10px;top:742px;font-size:11px;line-height:20px;color:#000;">Kniha</div>
<div style="left:115px;top:742px;font-size:11px;line-height:20px;color:#000;">2014</div>
<div style="left:155px;top:742px;font-size:11px;line-height:20px;color:#a0a0a0;letter-spacing:-0.7px;">PŘES</div>
<div style="left:360px;top:742px;font-size:11px;line-height:20px;color:#000;letter-spacing:-0.5px;">DEMO</div>
<div style="left:482px;top:742px;font-size:11px;line-height:20px;color:#000;">implicitní</div>
<div style="left:1012px;top:750px;width:1px;height:1px;background:#ffffff;"></div>
<div style="left:1013px;top:751px;width:1px;height:1px;background:#808080;"></div>
<div style="left:1013px;top:750px;width:1px;height:1px;background:#c8c8c8;"></div>
<div style="left:1012px;top:751px;width:1px;height:1px;background:#c8c8c8;"></div>
<div style="left:1009px;top:753px;width:1px;height:1px;background:#ffffff;"></div>
<div style="left:1010px;top:754px;width:1px;height:1px;background:#808080;"></div>
<div style="left:1010px;top:753px;width:1px;height:1px;background:#c8c8c8;"></div>
<div style="left:1009px;top:754px;width:1px;height:1px;background:#c8c8c8;"></div>
<div style="left:1012px;top:753px;width:1px;height:1px;background:#ffffff;"></div>
<div style="left:1013px;top:754px;width:1px;height:1px;background:#808080;"></div>
<div style="left:1013px;top:753px;width:1px;height:1px;background:#c8c8c8;"></div>
<div style="left:1012px;top:754px;width:1px;height:1px;background:#c8c8c8;"></div>
<div style="left:1009px;top:756px;width:1px;height:1px;background:#ffffff;"></div>
<div style="left:1010px;top:757px;width:1px;height:1px;background:#808080;"></div>
<div style="left:1010px;top:756px;width:1px;height:1px;background:#c8c8c8;"></div>
<div style="left:1009px;top:757px;width:1px;height:1px;background:#c8c8c8;"></div>
<div style="left:1012px;top:756px;width:1px;height:1px;background:#ffffff;"></div>
<div style="left:1013px;top:757px;width:1px;height:1px;background:#808080;"></div>
<div style="left:1013px;top:756px;width:1px;height:1px;background:#c8c8c8;"></div>
<div style="left:1012px;top:757px;width:1px;height:1px;background:#c8c8c8;"></div>
</body></html>
